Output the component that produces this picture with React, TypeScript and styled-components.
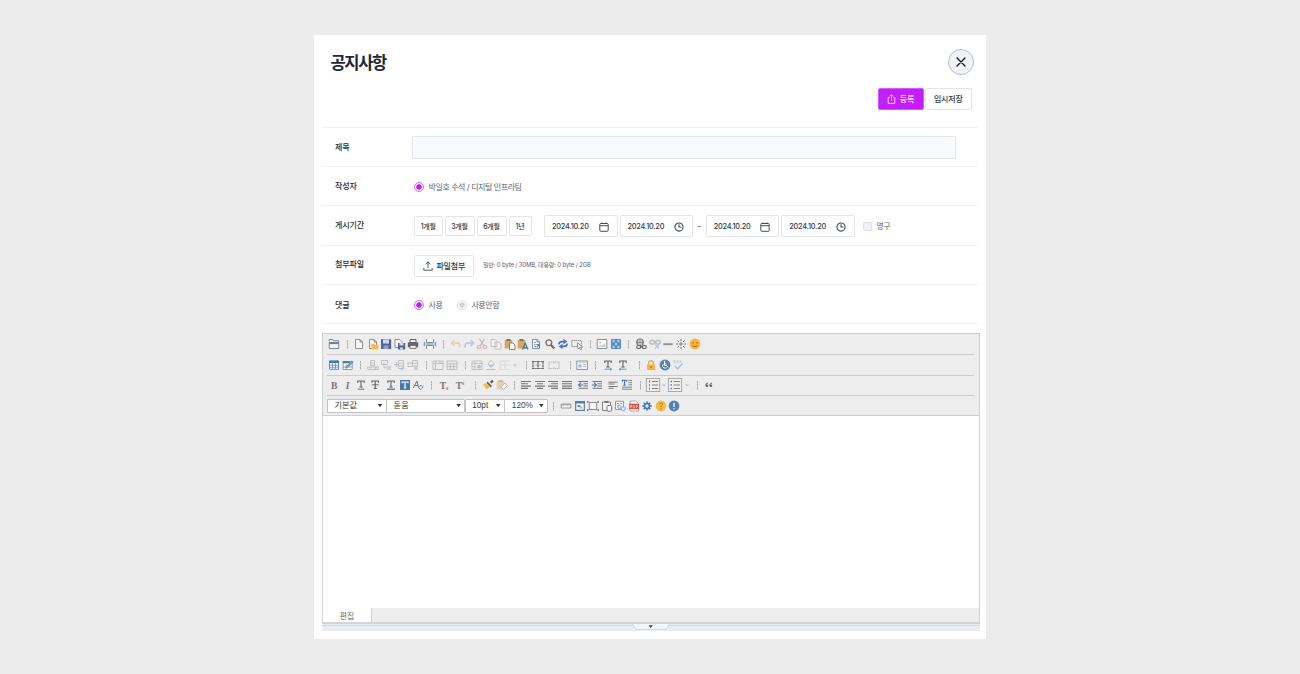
import React from "react";
import styled, { createGlobalStyle, css } from "styled-components";

const GlobalStyle = createGlobalStyle`
  *, *::before, *::after { box-sizing: border-box; }
  body {
    margin: 0;
    background: #ececec;
    font-family: Inter, "Noto Sans CJK KR", sans-serif;
    font-size: 8px;
    line-height: 1;
    color: #374151;
  }
  button, input { font: inherit; color: inherit; padding: 0; margin: 0; }
  svg { display: block; }
`;

const Page = styled.main`
  height: 674px;
  padding-top: 35px;
  overflow: hidden;
`;

const Modal = styled.section`
  width: 672px;
  height: 604px;
  margin: 0 auto;
  padding: 0 7px 0 8px;
  background: #fff;
`;

const Header = styled.header`
  display: flex;
  align-items: center;
  justify-content: space-between;
  height: 53px;
  padding: 1px 5px 0 8.5px;
`;

const Title = styled.h1`
  margin: 0;
  padding-top: 2.4px;
  font-size: 16.6px;
  font-weight: 700;
  letter-spacing: -1.4px;
  color: #1e2637;
`;

const CloseButton = styled.button`
  display: grid;
  place-items: center;
  width: 26px;
  height: 26px;
  border: 1px solid #b9bec8;
  border-radius: 50%;
  background: #f1f2f5;
`;

const Actions = styled.div`
  display: flex;
  justify-content: flex-end;
  gap: 1.5px;
  height: 39px;
  padding-right: 7.5px;
`;

const Button = styled.button<{ $w: number; $h?: number; $primary?: boolean; $gap?: number }>`
  display: flex;
  flex: none;
  align-items: center;
  justify-content: center;
  gap: ${(p) => p.$gap ?? 4}px;
  width: ${(p) => p.$w}px;
  height: ${(p) => p.$h ?? 22}px;
  border: 1px solid #e3e5ea;
  border-radius: 2px;
  background: #fff;
  color: #2f3848;
  font-weight: 500;
  white-space: nowrap;
  letter-spacing: -0.2px;
  ${(p) =>
    p.$primary &&
    css`
      border-color: #d05cff;
      background: #c41dff;
      color: #fbeaff;
    `}
`;

const Form = styled.div`
  width: 656px;
  border-top: 1px solid #eff1f5;
`;

const Row = styled.div<{ $h: number; $drop?: number }>`
  display: flex;
  align-items: center;
  height: ${(p) => p.$h}px;
  padding-left: 13px;
  padding-top: ${(p) => p.$drop ?? 0}px;
  border-bottom: 1px solid #eff1f5;
`;

const Label = styled.div<{ $lift?: number }>`
  flex: none;
  width: 79px;
  padding-bottom: ${(p) => p.$lift ?? 0}px;
  font-weight: 500;
  letter-spacing: -0.1px;
  color: #252d3c;
`;

const TextInput = styled.input`
  width: 544px;
  height: 23px;
  margin-left: -1.6px;
  border: 1px solid #e3e5ea;
  border-radius: 2px;
  background: #f8fafc;
`;

const Choice = styled.label<{ $before?: number; $after?: number }>`
  display: flex;
  flex: none;
  align-items: center;
  margin-left: ${(p) => p.$before ?? 0}px;
  margin-right: ${(p) => p.$after ?? 0}px;
  color: #5b6371;
  white-space: nowrap;
  letter-spacing: -0.42px;
`;

const Radio = styled.span<{ $on?: boolean }>`
  width: 10px;
  height: 10px;
  margin-right: 4.5px;
  border: 1px solid ${(p) => (p.$on ? "#d75fff" : "#d9dbe1")};
  border-radius: 50%;
  background: radial-gradient(circle, ${(p) => (p.$on ? "#bf1df5" : "#d0d3da")} 2.4px, #fff 3.1px);
`;

const CheckSquare = styled.span`
  width: 9px;
  height: 9px;
  margin-right: 4px;
  border: 1px solid #dde1e9;
  border-radius: 1px;
  background: #eff3f9;
`;

const Periods = styled.div`
  display: flex;
  flex: none;
  gap: 2px;
  margin-right: 12.5px;
  font-size: 7px;
`;

const DateField = styled.div`
  display: flex;
  flex: none;
  align-items: center;
  justify-content: space-between;
  width: 73.5px;
  height: 22px;
  margin-right: 2px;
  padding: 1px 8px 0 7px;
  border: 1px solid #e3e5ea;
  border-radius: 2px;
  font-size: 7.3px;
  font-weight: 500;
  letter-spacing: -0.2px;
  color: #2f3848;
`;

const Dash = styled.span`
  flex: none;
  width: 10.8px;
  padding-right: 2px;
  text-align: center;
`;

const FileInfo = styled.span`
  margin-left: 9px;
  padding-bottom: 1px;
  font-size: 6px;
  letter-spacing: -0.16px;
  color: #5b6371;
  white-space: nowrap;
`;

const Editor = styled.div`
  width: 658px;
  margin-top: 9px;
  border: 1px solid #cfd0d2;
  border-bottom: 0;
`;

const Toolbars = styled.div`
  padding: 0 5px 0 4px;
  background: #ededed;
  border-bottom: 1px solid #cfd0d2;
`;

const Toolbar = styled.div`
  display: flex;
  align-items: center;
  height: 20.3px;
  padding-left: 1px;
  & + & { border-top: 1px solid #cbcccd; }
`;

const Tool = styled.span<{ $gap: number; $dim?: boolean }>`
  flex: none;
  width: 12px;
  height: 12px;
  margin-left: ${(p) => p.$gap}px;
  opacity: ${(p) => (p.$dim ? 0.36 : 0.88)};
`;

const Divider = styled.span<{ $gap: number }>`
  flex: none;
  width: 1px;
  height: 9px;
  margin-left: ${(p) => p.$gap}px;
  margin-top: 1px;
  background: repeating-linear-gradient(#b0b0b0 0 2px, #cfcfcf 2px 3px);
`;

const Select = styled.div<{ $w: number }>`
  display: flex;
  align-items: center;
  justify-content: space-between;
  flex: none;
  width: ${(p) => p.$w}px;
  height: 14px;
  margin-right: -0.4px;
  padding: 0 3px 0 6.5px;
  border: 1px solid #c4c4c4;
  border-radius: 1px;
  background: #fff;
  font: 8.2px/12px "Liberation Sans", "Noto Sans CJK KR", sans-serif;
  color: #3a3a3a;
  &:first-child { margin-left: -1px; }
  &::after {
    content: "";
    width: 5px;
    height: 3.5px;
    background: #3a3a3a;
    clip-path: polygon(0 0, 100% 0, 50% 100%);
  }
`;

const SelectText = styled.span`
  height: 11px;
`;

const Canvas = styled.div`
  height: 192.3px;
  background: #fff;
`;

const Tabs = styled.div`
  display: flex;
  height: 14px;
  background: #ededed;
`;

const Tab = styled.div`
  display: flex;
  align-items: center;
  justify-content: center;
  width: 49px;
  border-right: 1px solid #cfd0d2;
  background: #fff;
  font: 7.8px/1 "Noto Sans CJK KR", sans-serif;
  color: #666;
`;

const ResizeBar = styled.div`
  width: 658px;
  height: 8.4px;
  border-top: 2px solid #d3d4d8;
  background: #e9ecf1;
`;

const ResizeEdge = styled.div`
  display: flex;
  justify-content: center;
  height: 2px;
  border-bottom: 1px solid #d7d9de;
`;

/* ---------- glyphs, drawn on a 12 x 12 grid ---------- */

const G = "#676767";
const B = "#3d76b5";
const Y = "#fbb52c";

const page = <path d="M2.5 1.5h4.500l2.500 2.500v6.500h-7z M7 1.500v2.500h2.500" fill="#fafafa" stroke={G} strokeWidth=".8" />;
const clip = (
  <>
    <path d="M.7 2h7.500v8.500H.7z" fill="#d7a048" />
    <path d="M2.500 1h4v2h-4z" fill={G} />
  </>
);
const grid = <path d="M1 2h10v8.500H1zM1 4.800h10M1 7.600h10M4.300 4.800v5.700M7.700 4.800v5.700" fill="none" stroke={G} strokeWidth=".9" />;
const serifT = <path d="M2.800 3.900V2h6.400v1.900M6 2v6M4.300 8h3.400" fill="none" stroke="#505050" strokeWidth="1.100" />;
const lines = (rows: [number, number][]) => (
  <path d={rows.map(([x, w], i) => `M${x} ${2.5 + i * 2.3}h${w}`).join("")} stroke={G} strokeWidth="1.100" fill="none" />
);
const disc = (fill: string) => <circle cx="6" cy="6" r="5.400" fill={fill} />;
const boxed = <rect x="-.7" y="-.6" width="13.400" height="13.200" fill="#f0f0f0" stroke="#8c8c8c" strokeWidth=".8" />;

const glyphs: Record<string, React.ReactNode> = {
  window: (
    <>
      <path d="M1.300 3.500V1.500h3.500l.7 1.200h5.200v1.500" fill="#e8ecef" stroke="#5e7281" strokeWidth=".9" />
      <path d="M1.300 4.500h9.400v6H1.300z" fill="#f8f8f8" stroke="#5e7281" strokeWidth=".9" />
      <path d="M1.300 4.500h9.400v1.600H1.300z" fill="#5e7281" />
    </>
  ),
  page,
  open: (
    <>
      {page}
      <path d="M4.300 5.800h2.500l.8 1h3.900v4.700h-7.200z" fill={Y} />
    </>
  ),
  save: (
    <>
      <path d="M1 1.300h9.500l.7.700v9H1z" fill="#3e4f91" />
      <path d="M3 1.500h6v4H3z" fill="#c9d6ee" />
      <path d="M3.500 7.500h5v3.500h-5z" fill="#8795c4" />
    </>
  ),
  saveAs: (
    <>
      <path d="M1 1.500h5l2 2v6H1z" fill="#fafafa" stroke={G} strokeWidth=".8" />
      <path d="M4 5h7.200v6.500H4z" fill="#3e4f91" />
      <path d="M5.500 5h4v2.500h-4zM6 9.500h3v2H6z" fill="#c9d6ee" />
    </>
  ),
  print: (
    <>
      <path d="M3 1.500h6v3H3z" fill="#eee" stroke="#555" />
      <path d="M.8 4.300h10.400v5H.8z" fill="#555" />
      <path d="M3 7.500h6v3H3z" fill="#eee" stroke="#555" strokeWidth=".8" />
    </>
  ),
  pageBreak: (
    <>
      <path d="M2.500 1v3.500h7V1M2.500 11V7.500h7V11" fill="#f8f8f8" stroke={G} strokeWidth=".8" />
      <path d="M1.500 6h9M.3 3.800v4.400M11.700 3.800v4.400" stroke={B} strokeWidth=".9" />
    </>
  ),
  undo: <path d="M4.500 2L1.500 5l3 3M1.800 5h5.200q3.500 0 3 4.500" fill="none" stroke="#ec9c28" strokeWidth="1.600" />,
  redo: <path d="M7.500 2l3 3-3 3M10.200 5H5Q1.500 5 2 9.500" fill="none" stroke="#4e86c2" strokeWidth="1.600" />,
  cut: (
    <g fill="none" strokeWidth="1.300">
      <path d="M3.500 1l4.500 7M8.500 1L4 8" stroke={G} />
      <circle cx="3" cy="9" r="1.700" stroke="#a56a6a" />
      <circle cx="9" cy="9" r="1.700" stroke="#a56a6a" />
    </g>
  ),
  copy: <path d="M1 1.500h4l2 2v5H1zM5 4h4l2 2v5H5z" fill="#fafafa" stroke={G} strokeWidth=".9" />,
  paste: (
    <>
      {clip}
      <path d="M5.500 5H9l2 2v4.500H5.500z" fill="#fff" stroke={G} strokeWidth=".9" />
    </>
  ),
  pasteText: (
    <>
      {clip}
      <path d="M5.500 11.500L8.200 5.500l2.800 6M6.500 9.700h3.500" fill="none" stroke="#2f6cae" strokeWidth="1.400" />
    </>
  ),
  pageFind: (
    <>
      {page}
      <path d="M4 4.500h2M4 6.500h1.500M4 8.500h2" stroke={B} strokeWidth=".8" />
      <path d="M6.500 6.500h3v3M9.500 6.300L6.800 9" fill="none" stroke={B} strokeWidth="1.100" />
    </>
  ),
  search: (
    <>
      <circle cx="4.800" cy="4.800" r="2.900" fill="#eef" stroke="#6d5a55" strokeWidth="1.300" />
      <path d="M7 7l3.300 3.500" stroke="#6d4a3d" strokeWidth="1.900" />
    </>
  ),
  replace: (
    <>
      <path d="M1.800 6.400Q2 3.600 5 3.600h2.500M10.200 5.600Q10 8.400 7 8.400H4.500" fill="none" stroke="#2f64bd" strokeWidth="1.600" />
      <path d="M6.500 1l3.800 2.600-3.800 2.600zM5.500 5.800L1.700 8.400 5.500 11z" fill="#2f64bd" />
    </>
  ),
  select: (
    <>
      <path d="M.8 2.500h9.500v6H.8z" fill="none" stroke={G} strokeDasharray="1.500 .5" strokeWidth=".8" />
      <path d="M6.500 4.800l5 4.200-2 .2 1 2-1 .4-1-2L7 11.100z" fill="#fff" stroke="#555" strokeWidth=".7" />
    </>
  ),
  image: (
    <>
      <path d="M1.200 1.500h9.600v9H1.200z" fill="#f8fafc" stroke={G} strokeWidth=".8" />
      <path d="M2.500 9l2-2 1.500 1 2-2.500L9.500 7.500V9z" fill="#b5cfe2" />
      <circle cx="4.300" cy="4.500" r="1" fill="#f4b66b" />
    </>
  ),
  pattern: (
    <>
      <path d="M1 1h10v10H1z" fill="#4480c2" />
      <path d="M3.500 1.500L5 3 3.500 4.500 2 3zM8.500 1.500L10 3 8.500 4.500 7 3zM6 4.500L7.500 6 6 7.500 4.500 6zM3.500 7.500L5 9l-1.500 1.500L2 9zM8.500 7.500L10 9l-1.500 1.500L7 9z" fill="#b6d2ef" />
    </>
  ),
  link: (
    <g fill="none" stroke="#505050">
      <circle cx="5" cy="4.300" r="3.500" strokeWidth=".9" />
      <path d="M1.500 4.300h7M5 1v6.500M3 2q-1 2.300 0 4.500M7 2q1 2.300 0 4.500" strokeWidth=".7" />
      <rect x="1.800" y="7.500" width="4" height="3" rx="1.500" strokeWidth="1.200" fill="#ededed" />
      <rect x="7.200" y="7.500" width="4" height="3" rx="1.500" strokeWidth="1.200" fill="#ededed" />
      <path d="M4.800 9h3.400" strokeWidth="1.200" />
    </g>
  ),
  unlink: (
    <g fill="none" stroke={G} strokeWidth="1.300">
      <rect x=".8" y="2.500" width="4.700" height="3.500" rx="1.700" />
      <rect x="6.500" y="2.500" width="4.700" height="3.500" rx="1.700" />
      <path d="M6 6.500l4 4M10 6.500l-4 4" stroke="#5286c8" strokeWidth="1.200" />
    </g>
  ),
  rule: <path d="M1.300 5.200h9.400v2H1.300z" fill="#8b8b8b" />,
  special: (
    <g stroke="#606060" strokeWidth=".9" fill="none">
      <path d="M6 1v2.200M6 8.800V11M1 6h2.200M8.800 6H11M2.500 2.500L4 4M8 8l1.500 1.500M9.500 2.500L8 4M4 8L2.500 9.500" />
      <circle cx="6" cy="6" r="1.200" />
    </g>
  ),
  smile: (
    <>
      {disc("#fbae1f")}
      <path d="M4 4v1.600M8 4v1.600M3.500 7.800q2.500 1.700 5 0" stroke="#80511c" strokeWidth=".9" fill="none" />
    </>
  ),
  table: (
    <>
      <path d="M1.500 2h9v8.300h-9z" fill="#fff" stroke={B} strokeWidth=".9" />
      <path d="M1 1.700h10v2.300H1z" fill="#2d62a3" />
      <path d="M1.500 6.200h9M1.500 8.200h9M4.500 3v7M7.500 3v7" stroke={B} strokeWidth=".7" />
    </>
  ),
  tableEdit: (
    <>
      <path d="M1.200 2.500h9v8h-9zM1.200 8h9M4.200 5.200v5.300" fill="#fff" stroke={G} strokeWidth=".7" />
      <path d="M.8 2h7v2.300h-7z" fill="#426a96" />
      <path d="M4.200 8.700l1-2.200L10 1.800l1.400 1.400-5 4.700z" fill="#5b93cf" stroke="#3b6796" strokeWidth=".4" />
    </>
  ),
  rowAbove: <path d="M3.500 1.500h4v5h-4zM3.500 4h4M.8 8h10.400v2.500H.8zM4 8v2.500M8 8v2.500M9 6.500v3" fill="none" stroke={G} strokeWidth=".9" />,
  rowDelete: (
    <>
      <path d="M1.500 1.500h6v4h-6zM4 3.500v5.300h3" fill="none" stroke={G} strokeWidth=".9" />
      <path d="M7 7l4 4M11 7l-4 4" stroke="#6f7fc0" strokeWidth="1.200" />
    </>
  ),
  colInsert: (
    <>
      <path d="M5.500 1.500h5v8h-5zM5.500 4.200h5M5.500 7h5M1 5.500h4.500M3.500 3v5" fill="none" stroke={G} strokeWidth=".9" />
      <path d="M7 9.800h4M9 7.800v4" stroke={B} />
    </>
  ),
  colDelete: (
    <>
      <path d="M5.500 1.500h5v5.500h-5zM5.500 4.200h5M1 4h4.500v3.500H1z" fill="none" stroke={G} strokeWidth=".9" />
      <path d="M7 7l4 4M11 7l-4 4" stroke="#9d6fb5" strokeWidth="1.200" />
    </>
  ),
  merge: <path d="M1 2h10v8.500H1zM1 4.500h10M3.500 2v8.500M8 2v2.500" fill="none" stroke={G} strokeWidth=".9" />,
  grid,
  cellProps: (
    <>
      <path d="M1 2h10v8.500H1zM1 4.500h10M4 2v8.500M1 7.500h3" fill="none" stroke={G} strokeWidth=".9" />
      <circle cx="8" cy="7.700" r="1.900" fill={B} />
    </>
  ),
  fill: (
    <>
      <path d="M3 5l3-3.500L9.500 5 6 8.500zM1.500 10.500h9" fill="#fff" stroke={G} strokeWidth="1" />
      <path d="M3.500 5.500H9L6 8.300z" fill={B} />
    </>
  ),
  borders: <path d="M1 2h10M6 2v8M1 6h10M1 2v8M1 10.500h10" fill="none" stroke="#b0b0b0" strokeWidth=".8" />,
  more: <path d="M4.200 5.500h3.600L6 7.500z" fill={G} />,
  frame: (
    <>
      <path d="M1 2v8M6 2v8M11 2v8" stroke="#505050" strokeWidth="1.200" strokeDasharray="3 .5" />
      <path d="M.3 2.500h11.400M.3 9.500h11.400" stroke="#505050" strokeWidth="1.200" strokeDasharray="1.500 .5" />
      <path d="M3.500 6h5" stroke="#8a8a8a" strokeWidth=".8" />
    </>
  ),
  frameOff: (
    <path d="M1 3v6.500M6 3v1.500M6 8v1.500M11 3v6.500M.5 3h11M.5 9.500h11" fill="none" stroke={G} strokeWidth="1.200" strokeDasharray="1.500 .6" />
  ),
  form: (
    <>
      <path d="M.8 2h10.600v8.500H.8z" fill="#f3f6f9" stroke="#718291" strokeWidth=".9" />
      <path d="M2.500 5.500h3v3h-3z" fill="#91b3d9" />
      <path d="M7 5.500h3M7 7.500h3M2.500 3.700h7" stroke="#aaa" strokeWidth=".7" />
    </>
  ),
  textLower: (
    <>
      {serifT}
      <path d="M2.500 10.200h7M8 9l1.700 1.200L8 11.400" stroke={B} strokeWidth=".8" fill="none" />
    </>
  ),
  textRaise: (
    <>
      {serifT}
      <path d="M2.500 10.200h7M4 9l-1.700 1.200L4 11.400" stroke={B} strokeWidth=".8" fill="none" />
    </>
  ),
  lock: (
    <>
      <path d="M3.700 5.500V3.800q0-2 2.300-2t2.300 2v1.700" fill="none" stroke="#c99747" strokeWidth="1.200" />
      <path d="M2 5.300h8v5.700H2z" fill="#fcae20" />
      <path d="M5.500 7h1v2h-1z" fill="#8c5a10" />
    </>
  ),
  access: (
    <>
      {disc("#3f73aa")}
      <path d="M5.500 3v3.500H8l1 2M4 5q-1.500 3 1 4 2 .5 2.700-1M5.500 5h2" fill="none" stroke="#fff" strokeWidth="1" />
      <circle cx="5.500" cy="2.500" r=".8" fill="#fff" />
    </>
  ),
  spell: (
    <>
      <path d="M1.500 3.200h8.500M1.500 2h8.500" stroke={G} strokeWidth=".8" strokeDasharray="2 1" />
      <path d="M3 7l2.500 2.800L10.500 4.500" fill="none" stroke="#4879c4" strokeWidth="1.500" />
    </>
  ),
  underline: (
    <>
      {serifT}
      <path d="M2.800 10.200h6.400" stroke="#505050" strokeWidth=".9" />
    </>
  ),
  strike: (
    <>
      <path d="M3 3.700V2h6.400v1.700M6.200 2v7.500M4.600 9.500h3.200" fill="none" stroke="#555" strokeWidth="1.200" />
      <path d="M2.700 5.800h7" stroke="#555" strokeWidth=".9" />
    </>
  ),
  textColor: (
    <>
      {serifT}
      <path d="M2 9.500h8v1.500H2z" fill={B} />
    </>
  ),
  highlight: (
    <>
      <path d="M1 1h10v10H1z" fill="#3568a2" />
      <path d="M3 4.200V3h6v1.200M6 3v6M4.700 9h2.600" fill="none" stroke="#fff" strokeWidth="1.200" />
    </>
  ),
  clearFormat: (
    <>
      <path d="M1.300 9L5 2l1.600 7M2.800 6.500h3.400" fill="none" stroke={G} strokeWidth="1" />
      <path d="M6.500 8.800L9 6l2.200 1.700-2.500 2.800z" fill="#dfeaf5" stroke="#5680ab" strokeWidth=".9" />
    </>
  ),
  brush: (
    <>
      <path d="M8 3l2-2.200 1.700 1.700-2.200 2z" fill="#444" />
      <path d="M5.500 2.500l4.500 4.500-1.500 1.500L4.500 4z" fill="#5f5042" />
      <path d="M.8 5.500l3.200-1.200 3.500 3.700L4.500 10.800 3.500 8.500z" fill="#f9b02b" />
    </>
  ),
  brushPaste: (
    <>
      {clip}
      <path d="M5 8l4-4 2.500 2.500-4 4z" fill="#fff" stroke={G} />
    </>
  ),
  alignLeft: lines([[1, 10], [1, 7], [1, 10], [1, 7]]),
  alignCenter: lines([[1, 10], [3, 6], [1, 10], [3, 6]]),
  alignRight: lines([[1, 10], [4, 7], [1, 10], [4, 7]]),
  justify: lines([[1, 10], [1, 10], [1, 10], [1, 10]]),
  outdent: (
    <>
      <path d="M1.500 2.500H11M6.500 4.800H11M6.500 7H11M1.500 9.300H11" stroke={G} />
      <path d="M6.200 6H2M4 3.700L1.500 6 4 8.200" stroke="#3469b4" fill="none" strokeWidth="1.100" />
    </>
  ),
  indent: (
    <>
      <path d="M1.500 2.500H11M6.500 4.800H11M6.500 7H11M1.500 9.300H11" stroke={G} />
      <path d="M.8 6H5M3 3.700L5.500 6 3 8.200" stroke="#3469b4" fill="none" strokeWidth="1.100" />
    </>
  ),
  spacing: <path d="M1.500 3.200h9M1.500 5h6M1.500 7.500h9M1.500 9.300h5" stroke={G} fill="none" strokeWidth="1" />,
  lineHeight: (
    <>
      <path d="M1.300 2.800V1.300h4.400v1.500M3.500 1.300v5M2.200 6.300h2.600" stroke="#2f64ae" fill="none" strokeWidth="1.100" />
      <path d="M7.500 1.600H11M7.500 3.700H11M7.500 5.800H11M1 8.200h10M1 10.200h10" stroke={G} strokeWidth=".9" />
    </>
  ),
  numbered: (
    <>
      {boxed}
      <path d="M2.500 1.300v2.400M2.500 5v2.200M2.500 8.500v2.200" stroke="#5d7ea5" />
      <path d="M5 2.500h6M5 6h6M5 9.500h6" stroke={G} strokeWidth=".9" />
    </>
  ),
  bulleted: (
    <>
      {boxed}
      <path d="M1.500 1.800H3v1.500H1.500zM1.500 5.300H3v1.500H1.500zM1.500 8.800H3v1.500H1.500z" fill={B} />
      <path d="M4.500 2.500H11M4.500 6H11M4.500 9.500H11" stroke={G} strokeWidth=".9" />
    </>
  ),
  quote: (
    <>
      <path d="M5 4Q2.800 4 2.800 6.500M9 4Q6.800 4 6.800 6.500" fill="none" stroke="#505050" strokeWidth="1" />
      <circle cx="3.900" cy="6.800" r="1.300" fill="#505050" />
      <circle cx="7.900" cy="6.800" r="1.300" fill="#505050" />
    </>
  ),
  ruler: <path d="M1.200 4h9.600v4H1.200zM3 4v2M5 4v1.500M7 4v2M9 4v1.500" fill="#f3f3f3" stroke={G} strokeWidth=".7" />,
  layout: (
    <>
      <path d="M1.700 1.700h8.600v8.600H1.700z" fill="#fff" stroke="#3b6fc0" strokeWidth="1.200" />
      <path d="M1.200 1.200h9.600v2.300H1.200z" fill="#3b6fc0" />
      <path d="M3.500 5.200h3V7h-3z" fill="#3b6fc0" />
      <path d="M5.500 6.500h3v2.200h-3z" fill="#eab94d" />
    </>
  ),
  fullscreen: (
    <>
      <path d="M2.300 2.500h7.400v7H2.300z" fill="#f6f6f6" stroke={G} strokeWidth=".8" />
      <path d="M.5 1.300l1.800 1.200M11.500 1.300L9.700 2.500M.5 10.700l1.800-1.200M11.500 10.700L9.700 9.500M.7 1v2M11.300 1v2M.7 9v2M11.300 9v2" fill="none" stroke={G} strokeWidth=".9" />
    </>
  ),
  clipboard: (
    <>
      <path d="M1.500 2h8v8.500h-8z" fill="#f5f5f5" stroke={G} strokeWidth=".9" />
      <path d="M3.500 1h4v2h-4z" fill={G} />
      <rect x="6" y="5.500" width="4.700" height="5.700" rx="1" fill="#fff" stroke={G} />
    </>
  ),
  template: (
    <>
      <path d="M1.500 1.300h8v8.200h-8zM3 3.500h2M3 6h2M6 3.500h2" fill="#f8f8f8" stroke="#7c868f" strokeWidth=".9" />
      <circle cx="5.500" cy="7" r="1.700" fill="#e4ece4" stroke="#789" strokeWidth=".8" />
      <circle cx="9.300" cy="8.800" r="2" fill="#dcebf8" stroke="#6c94ba" strokeWidth=".8" />
    </>
  ),
  pdf: (
    <>
      <path d="M2 1h6l2.500 2.500V11H2z" fill="#fff" stroke="#b98580" strokeWidth=".8" />
      <path d="M1.200 3.700h9.800v5.500H1.200z" fill="#d4382a" />
      <path d="M2.500 8.200V5.300h1.300v1.400H2.500M5.300 5.300v2.900q1.500 0 1.500-1.400t-1.500-1.500M8.500 8.200V5.300H10M8.500 6.600h1.300" fill="none" stroke="#fff" strokeWidth=".5" />
    </>
  ),
  gear: (
    <g fill="none" stroke="#2e63b8">
      <circle cx="6" cy="6" r="2.500" strokeWidth="1.700" />
      <path d="M6 1.200v2M6 8.800v2M1.200 6h2M8.800 6h2M2.700 2.700L4 4M8 8l1.300 1.300M9.300 2.700L8 4M4 8L2.700 9.300" strokeWidth="1.400" />
    </g>
  ),
  help: (
    <>
      {disc(Y)}
      <path d="M4.400 4.600q0-1.600 1.600-1.600t1.600 1.400q0 .9-1.600 1.600v1M6 8.200v1.200" fill="none" stroke="#a86d12" strokeWidth="1" />
    </>
  ),
  info: (
    <>
      {disc("#3f73aa")}
      <path d="M6 2.700V7M6 8.200v1.300" stroke="#fff" strokeWidth="1.300" />
    </>
  ),
};

const Letter = styled.span<{ $italic?: boolean }>`
  display: block;
  text-align: center;
  font: ${(p) => (p.$italic ? "italic " : "")}bold 9.6px/13px "Liberation Serif", serif;
  color: #666;
  white-space: nowrap;
  sub, sup { font-size: 5.5px; line-height: 0; }
  sub { vertical-align: -0.5px; }
  sup { vertical-align: 4.5px; }
`;

const letters: Record<string, React.ReactNode> = {
  bold: <Letter>B</Letter>,
  italic: <Letter $italic>I</Letter>,
  sub: <Letter>T<sub>s</sub></Letter>,
  sup: <Letter>T<sup>s</sup></Letter>,
};

/* Each entry is [name, space before it, greyed out]; "|" is a divider. */
type Entry = [string, number, boolean?];

const fileTools: Entry[] = [
  ["window", 0], ["|", 6.5], ["page", 5.5], ["open", 1.5], ["save", 1.5], ["saveAs", 2], ["print", 1], ["pageBreak", 5],
  ["|", 6.5], ["undo", 6, true], ["redo", 1, true], ["cut", 1.5, true], ["copy", 2, true], ["paste", 1.7], ["pasteText", 1.6],
  ["pageFind", 1], ["search", 1.4], ["replace", 1.6], ["select", 2], ["|", 6.9], ["image", 4.8], ["pattern", 1.7],
  ["|", 6.8], ["link", 5.5], ["unlink", 2, true], ["rule", 1], ["special", 1], ["smile", 2],
];

const tableTools: Entry[] = [
  ["table", 0], ["tableEdit", 1.5], ["|", 6.5], ["rowAbove", 6.2, true], ["rowDelete", 1.3, true], ["colInsert", 1, true],
  ["colDelete", 1.7, true], ["|", 7.2], ["merge", 5.1, true], ["grid", 1.7, true], ["|", 6.5], ["cellProps", 5.8, true],
  ["fill", 1.4, true], ["borders", 2, true], ["more", -1.5, true], ["|", 5], ["frame", 4.8], ["frameOff", 4.3, true],
  ["|", 9.5], ["form", 5.5], ["|", 6.9], ["textLower", 5.8], ["textRaise", 3], ["|", 9.8], ["lock", 5.2], ["access", 1.7],
  ["spell", 1.6, true],
];

const textTools: Entry[] = [
  ["bold", 0.3], ["italic", 1.4], ["underline", 1], ["strike", 2.3], ["textColor", 4], ["highlight", 2],
  ["clearFormat", 1], ["|", 7.2], ["sub", 5.8], ["sup", 4], ["|", 9.2], ["brush", 5.5], ["brushPaste", 2, true], ["|", 6.1],
  ["alignLeft", 5.2], ["alignCenter", 1.7], ["alignRight", 1.6], ["justify", 1.7], ["outdent", 4.3], ["indent", 1.7],
  ["spacing", 4.3], ["lineHeight", 2], ["|", 6.9], ["numbered", 5.8], ["more", -1.3, true], ["bulleted", -0.4],
  ["more", -0.6, true], ["|", 4.1], ["quote", 5.2],
];

const viewTools: Entry[] = [
  ["|", 6], ["ruler", 6], ["layout", 1.3], ["fullscreen", 1.7], ["clipboard", 1.3], ["template", 1], ["pdf", 2],
  ["gear", 1.4], ["help", 1.6], ["info", 1.7],
];

const Tools = ({ entries }: { entries: Entry[] }) => (
  <>
    {entries.map(([name, gap, dim], i) =>
      name === "|" ? (
        <Divider key={i} $gap={gap} />
      ) : (
        <Tool key={i} $gap={gap} $dim={dim}>
          {letters[name] ?? (
            <svg width="12" height="12" viewBox="0 0 12 12" overflow="visible">
              {glyphs[name]}
            </svg>
          )}
        </Tool>
      )
    )}
  </>
);

const CalendarIcon = () => (
  <svg width="10" height="10" viewBox="0 0 10 10" fill="none" stroke="#3b4454" strokeWidth=".95">
    <rect x=".8" y="1.500" width="8.400" height="7.800" rx="1" />
    <path d="M.8 3.700h8.400M3 .4v1.600M7 .4v1.600" />
  </svg>
);

const ClockIcon = () => (
  <svg width="10" height="10" viewBox="0 0 10 10" fill="none" stroke="#3b4454" strokeWidth="1.050">
    <circle cx="5" cy="5" r="4.100" />
    <path d="M5 2.200V5h2.400" />
  </svg>
);

const ShareIcon = () => (
  <svg width="9" height="10" viewBox="0 0 9 10" fill="none" stroke="#fbeaff" strokeWidth=".9" strokeLinejoin="round">
    <path d="M2.900 3.500H1.200v5.800h6.600V3.500H6.100M4.500 6.500V.9M2.800 2.400L4.500.7l1.700 1.700" />
  </svg>
);

const UploadIcon = () => (
  <svg width="10" height="10" viewBox="0 0 10 10" fill="none" stroke="#3b4454" strokeWidth=".9" strokeLinecap="round" strokeLinejoin="round">
    <path d="M.8 7.500v1.700h8.400V7.500M5 6.800V1M2.800 3.100L5 .9l2.200 2.200" />
  </svg>
);

const CloseIcon = () => (
  <svg width="10" height="10" viewBox="0 0 10 10" stroke="#111" strokeWidth="1.300" strokeLinecap="round">
    <path d="M1 1l8 8M9 1L1 9" />
  </svg>
);

const ResizeHandle = () => (
  <svg width="38" height="6" viewBox="0 0 38 6" overflow="visible">
    <path d="M0 0h38l-4 5.300H4z" fill="#f5f6fa" />
    <path d="M0 0l4 5.300h30L38 0" fill="none" stroke="#d0d3d9" strokeWidth=".9" />
    <path d="M16.500 1.200h4.400L18.700 4z" fill="#444" />
  </svg>
);

const DateTime = () => (
  <>
    <DateField>2024.10.20<CalendarIcon /></DateField>
    <DateField>2024.10.20<ClockIcon /></DateField>
  </>
);

const Dropdown = ({ width, children }: { width: number; children: React.ReactNode }) => (
  <Select $w={width}>
    <SelectText>{children}</SelectText>
  </Select>
);

export default function App() {
  return (
    <Page>
      <GlobalStyle />
      <Modal>
        <Header>
          <Title>공지사항</Title>
          <CloseButton aria-label="닫기"><CloseIcon /></CloseButton>
        </Header>
        <Actions>
          <Button $w={46} $gap={4} $primary><ShareIcon />등록</Button>
          <Button $w={46.5}>임시저장</Button>
        </Actions>
        <Form>
          <Row $h={39} $drop={1}>
            <Label $lift={1}>제목</Label>
            <TextInput aria-label="제목" />
          </Row>
          <Row $h={39} $drop={1}>
            <Label $lift={1}>작성자</Label>
            <Choice><Radio $on />박일호 수석 / 디지털 인프라팀</Choice>
          </Row>
          <Row $h={40} $drop={1}>
            <Label $lift={3}>게시기간</Label>
            <Periods>
              <Button $w={28.5} $h={20}>1개월</Button>
              <Button $w={30} $h={20}>3개월</Button>
              <Button $w={30} $h={20}>6개월</Button>
              <Button $w={23} $h={20}>1년</Button>
            </Periods>
            <DateTime />
            <Dash>-</Dash>
            <DateTime />
            <Choice $before={6.5}><CheckSquare />영구</Choice>
          </Row>
          <Row $h={39} $drop={1}>
            <Label $lift={3}>첨부파일</Label>
            <Button $w={60} $gap={3.5}><UploadIcon />파일첨부</Button>
            <FileInfo>일반: 0 byte / 30MB, 대용량: 0 byte / 2GB</FileInfo>
          </Row>
          <Row $h={39} $drop={1}>
            <Label>댓글</Label>
            <Choice $after={14.5}><Radio $on />사용</Choice>
            <Choice><Radio />사용안함</Choice>
          </Row>
        </Form>
        <Editor>
          <Toolbars>
            <Toolbar><Tools entries={fileTools} /></Toolbar>
            <Toolbar><Tools entries={tableTools} /></Toolbar>
            <Toolbar><Tools entries={textTools} /></Toolbar>
            <Toolbar>
              <Dropdown width={59.5}>기본값</Dropdown>
              <Dropdown width={79}>돋움</Dropdown>
              <Dropdown width={40}>10pt</Dropdown>
              <Dropdown width={43.5}>120%</Dropdown>
              <Tools entries={viewTools} />
            </Toolbar>
          </Toolbars>
          <Canvas />
          <Tabs><Tab>편집</Tab></Tabs>
        </Editor>
        <ResizeBar>
          <ResizeEdge><ResizeHandle /></ResizeEdge>
        </ResizeBar>
      </Modal>
    </Page>
  );
}
